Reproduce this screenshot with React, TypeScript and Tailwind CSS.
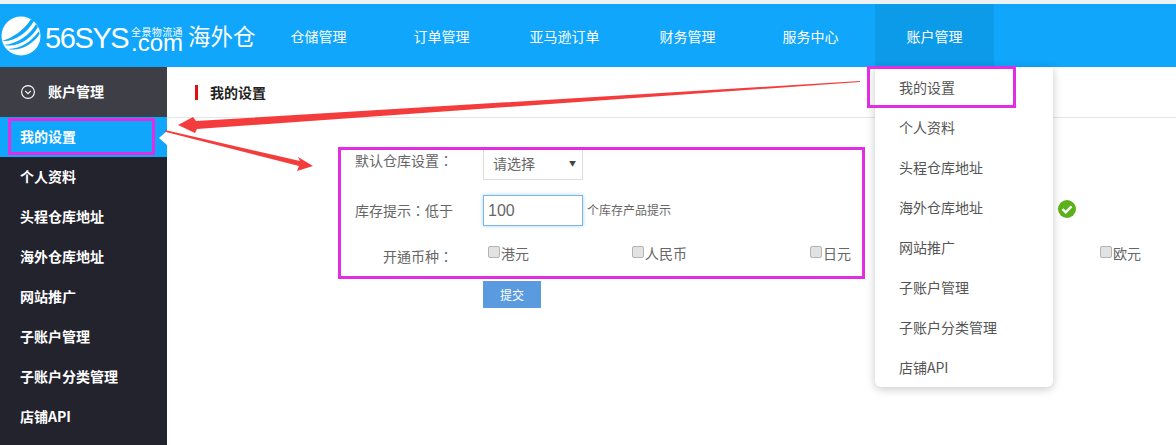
const navItems = ["仓储管理", "订单管理", "亚马逊订单", "财务管理", "服务中心", "账户管理"];
const menuItems = ["我的设置", "个人资料", "头程仓库地址", "海外仓库地址", "网站推广", "子账户管理", "子账户分类管理", "店铺API"];
const currencies = [
  { name: "港元", width: "w-[144px]" },
  { name: "人民币", width: "w-[178px]" },
  { name: "日元", width: "w-[290px]" },
  { name: "欧元", width: "w-[60px]" },
];

const Logo = () => (
  <div className="flex w-[257px] shrink-0 items-center pl-[1px] text-white">
    <svg width="40" height="40" viewBox="0 0 40 40" className="shrink-0">
      <circle cx="20" cy="20" r="19.5" fill="#fff" />
      <path d="M1 25C12 22 24 13 30 3l3 2C27 16 14 26 1 25Z" fill="#0fa6fb" />
      <path d="M3 29C16 28 29 19 35 8l2 3C31 22 17 32 3 29Z" fill="#0fa6fb" />
      <path d="M7 33C20 33 32 24 38 15l.6 3C33 27 20 36 7 33Z" fill="#0fa6fb" />
    </svg>
    <span className="ml-[4px] mt-[5px] w-[83px] shrink-0 font-['Liberation_Sans',sans-serif] text-[29px] leading-none tracking-[-1.4px]">56SYS</span>
    <div className="mt-[4px] flex w-[58px] shrink-0 flex-col items-center">
      <span className="h-[11px] whitespace-nowrap font-['Noto_Sans_CJK_SC',sans-serif] text-[10px] leading-[11px] tracking-[0.4px]">全景物流通</span>
      <span className="h-[13px] whitespace-nowrap font-['Liberation_Sans',sans-serif] text-[24px] leading-[11px]">.com</span>
    </div>
    <span className="ml-[2px] shrink-0 whitespace-nowrap font-['Noto_Sans_CJK_SC',sans-serif] text-[22.5px] leading-none">海外仓</span>
  </div>
);

const Checkbox = () => (
  <span className="mr-[1px] inline-block h-[12px] w-[12px] rounded-[2px] border border-[#b4b4b4] bg-[#e2e2e2]" />
);

const Annotations = () => (
  <svg width="1176" height="445" viewBox="0 0 1176 445" className="pointer-events-none absolute left-0 top-0">
    <polygon points="860,81 860,82 197,129 195,133 178,125 193,117 196,121" fill="#f53c3c" />
    <polygon points="165,130 166,132 299,166 297,171 313,166 298,157 300,161" fill="#f53c3c" />
  </svg>
);

export default function App() {
  return (
    <div className="relative h-[445px] w-[1176px] overflow-hidden bg-white font-['Noto_Sans_CJK_TC',sans-serif]">
      <div className="h-[4px] bg-[#eef1f3]" />
      <header className="flex h-[63px] bg-[#0fa6fb] font-['Noto_Sans_CJK_SC',sans-serif]">
        <Logo />
        <nav className="flex">
          {navItems.map((item, i) => (
            <div
              key={item}
              className={`flex h-full items-center justify-center pt-[2px] text-[14px] text-white ${i === 5 ? "ml-[3px] w-[119px] bg-[#0c9be9]" : "w-[123px]"}`}
            >
              {item}
            </div>
          ))}
        </nav>
      </header>

      <div className="flex h-[378px]">
        <aside className="w-[167px] shrink-0 bg-[#23232e] font-['Noto_Sans_CJK_SC',sans-serif] text-[14px] font-bold text-white">
          <div className="flex h-[50px] items-center gap-[13px] bg-[#3e3e46] pb-[1px] pl-[21px]">
            <svg width="14" height="14" viewBox="0 0 14 14" fill="none" stroke="#fff" strokeWidth="1.1">
              <circle cx="7" cy="7" r="6.4" />
              <path d="M4.2 5.8 7 8.6l2.8-2.8" />
            </svg>
            账户管理
          </div>
          {menuItems.map((item, i) => (
            <div key={item} className={`relative flex h-[40px] items-center pb-[1px] pl-[20px] ${i === 0 ? "bg-[#0fa6fb]" : ""}`}>
              {item}
              {i === 0 && (
                <span className="absolute right-0 top-[14px] h-0 w-0 border-y-[7px] border-r-[8px] border-y-transparent border-r-white" />
              )}
            </div>
          ))}
        </aside>

        <main className="min-w-0 flex-1">
          <div className="flex h-[51px] items-center border-b border-[#e6e6e6] pl-[28px] font-['Noto_Sans_CJK_SC',sans-serif] text-[14px] font-bold text-[#222]">
            <span className="mr-[12px] h-[15px] w-[3px] bg-[#e01010]" />
            我的设置
          </div>
          <div className="pl-[188px] pt-[30px] text-[14px] text-[#666]">
            <div className="flex h-[32px] items-start">
              <span className="mt-[2px] w-[128px]">默认仓库设置：</span>
              <div className="flex h-[32px] w-[100px] items-center justify-between border border-[#ddd] pb-[1px] pl-[9px] pr-[6px]">
                请选择
                <span className="text-[7px] text-[#444]">▼</span>
              </div>
            </div>
            <div className="mt-[15px] flex h-[31px] items-center">
              <span className="w-[128px]">库存提示：低于</span>
              <div className="flex h-[31px] w-[100px] items-center border border-[#7fb5e2] pl-[4px] font-['Liberation_Sans',sans-serif] text-[16px] text-[#666] shadow-[0_0_4px_#a9d2f3]">
                100
              </div>
              <span className="mb-[1px] ml-[4px] text-[12px]">个库存产品提示</span>
            </div>
            <div className="mt-[16px] flex h-[26px] items-center">
              <span className="mt-[2px] w-[133px] pl-[28px]">开通币种：</span>
              {currencies.map((c) => (
                <label key={c.name} className={`flex shrink-0 items-center ${c.width}`}>
                  <span className="mt-[-5px]"><Checkbox /></span>
                  <span className="mt-[-4px]">{c.name}</span>
                </label>
              ))}
            </div>
            <button className="ml-[128px] mt-[13px] h-[27px] w-[58px] bg-[#5a9be0] text-[12px] text-white">提交</button>
          </div>
        </main>
      </div>

      <ul className="absolute left-[875px] top-[67px] h-[320px] w-[178px] rounded-b-[6px] bg-white pl-[24px] font-['Noto_Sans_CJK_SC',sans-serif] text-[14px] text-[#555] shadow-[0_2px_10px_rgba(0,0,0,0.22)]">
        {menuItems.map((item) => (
          <li key={item} className="flex h-[40px] items-center">{item}</li>
        ))}
      </ul>

      <svg width="18" height="18" viewBox="0 0 18 18" className="absolute left-[1058px] top-[200px]">
        <circle cx="9" cy="9" r="9" fill="#5cb01c" />
        <path d="m4.5 9.2 3.2 3.2 5.8-6" fill="none" stroke="#fff" strokeWidth="2.4" />
      </svg>

      <Annotations />
      <div className="absolute left-[8px] top-[118px] h-[37px] w-[147px] border-[3px] border-[#e22ee2]" />
      <div className="absolute left-[867px] top-[66px] h-[42px] w-[149px] border-[3px] border-[#e22ee2]" />
      <div className="absolute left-[338px] top-[147px] h-[132px] w-[527px] border-[3px] border-[#e22ee2]" />
    </div>
  );
}
